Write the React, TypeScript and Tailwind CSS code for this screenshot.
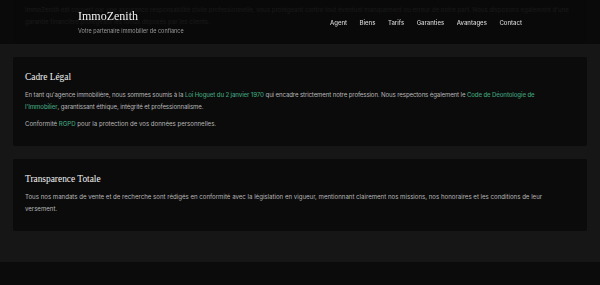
import React from "react";

const serif = { fontFamily: '"Liberation Serif", "Times New Roman", serif' };

function Link({ children }: { children: React.ReactNode }) {
  return <span className="text-[#3f9f78] font-medium">{children}</span>;
}

function Card({ title, children }: { title: string; children: React.ReactNode }) {
  return (
    <div className="bg-[#0b0b0b] rounded-[2px] px-[12px] pt-[12px] pb-[16px]">
      <h3 className="text-[9.4px] leading-[16px] text-[#f2f2f2] mb-[4px]" style={serif}>
        {title}
      </h3>
      <div className="text-[6.1px] leading-[12px] text-[#b7b7b7] flex flex-col gap-[5px]">{children}</div>
    </div>
  );
}

export default function App() {
  const nav = ["Agent", "Biens", "Tarifs", "Garanties", "Avantages", "Contact"];

  return (
    <div
      className="relative min-h-screen bg-[#0b0b0b] overflow-hidden"
      style={{ fontFamily: 'Inter, "Noto Sans", Arial, sans-serif' }}
    >
      {/* Fixed header over scrolled content */}
      <header className="fixed top-0 inset-x-0 h-[44px] bg-[#0a0a0a]/[0.92] z-10">
        <div className="w-[444px] h-full mx-auto flex items-center justify-between">
          <div className="flex flex-col">
            <span className="text-[12px] leading-[14px] text-[#f4f4f4]" style={serif}>
              ImmoZenith
            </span>
            <span className="text-[5.5px] leading-[8px] text-[#9a9a9a] mt-[4px]">
              Votre partenaire immobilier de confiance
            </span>
          </div>
          <nav className="flex gap-[12.5px] text-[6px] text-[#d2d2d2] font-medium">
            {nav.map((n) => (
              <span key={n}>{n}</span>
            ))}
          </nav>
        </div>
      </header>

      <main className="bg-[#161616] px-[13px] pb-[31px] -mt-[28px] flex flex-col gap-[13px]">
        <Card title="Assurance & Garantie Financière">
          <p>
            ImmoZenith est couvert par une assurance responsabilité civile professionnelle, vous protégeant contre tout
            éventuel manquement ou erreur de notre part. Nous disposons également d'une garantie financière protégeant
            les fonds déposés par les clients.
          </p>
        </Card>

        <Card title="Cadre Légal">
          <p className="tracking-[-0.12px] max-w-[538px]">
            En tant qu'agence immobilière, nous sommes soumis à la <Link>Loi Hoguet du 2 janvier 1970</Link> qui
            encadre strictement notre profession. Nous respectons également le{" "}
            <Link>Code de Déontologie de l'Immobilier</Link>, garantissant éthique, intégrité et professionnalisme.
          </p>
          <p>
            Conformité <Link>RGPD</Link> pour la protection de vos données personnelles.
          </p>
        </Card>

        <Card title="Transparence Totale">
          <p>
            Tous nos mandats de vente et de recherche sont rédigés en conformité avec la législation en vigueur,
            mentionnant clairement nos missions, nos honoraires et les conditions de leur versement.
          </p>
        </Card>
      </main>

      <footer className="h-[22px] bg-[#0b0b0b]" />
    </div>
  );
}
